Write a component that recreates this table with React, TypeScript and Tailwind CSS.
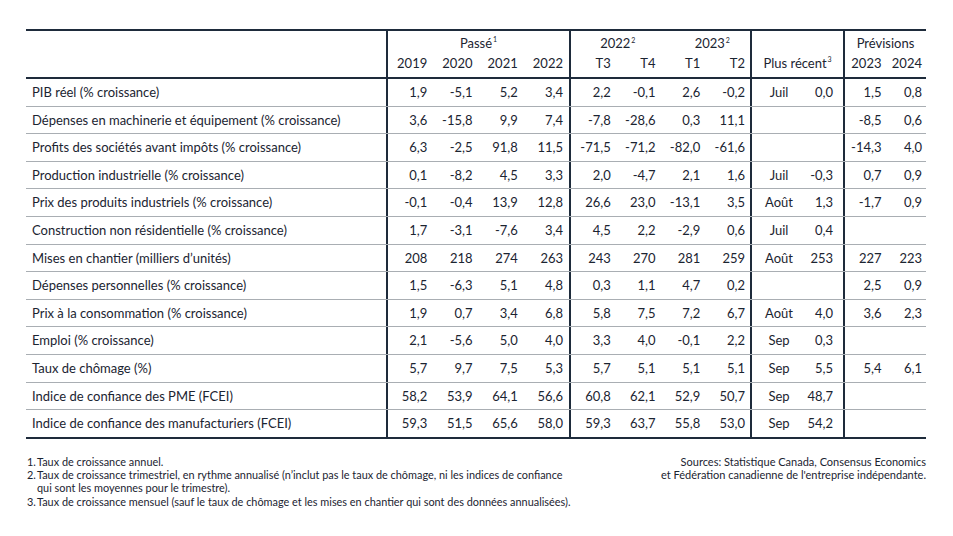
import React from 'react';

type Row = [string, ...string[]];

const rows: Row[] = [
  ['PIB réel (% croissance)', '1,9', '-5,1', '5,2', '3,4', '2,2', '-0,1', '2,6', '-0,2', 'Juil', '0,0', '1,5', '0,8'],
  ['Dépenses en machinerie et équipement (% croissance)', '3,6', '-15,8', '9,9', '7,4', '-7,8', '-28,6', '0,3', '11,1', '', '', '-8,5', '0,6'],
  ['Profits des sociétés avant impôts (% croissance)', '6,3', '-2,5', '91,8', '11,5', '-71,5', '-71,2', '-82,0', '-61,6', '', '', '-14,3', '4,0'],
  ['Production industrielle (% croissance)', '0,1', '-8,2', '4,5', '3,3', '2,0', '-4,7', '2,1', '1,6', 'Juil', '-0,3', '0,7', '0,9'],
  ['Prix des produits industriels (% croissance)', '-0,1', '-0,4', '13,9', '12,8', '26,6', '23,0', '-13,1', '3,5', 'Août', '1,3', '-1,7', '0,9'],
  ['Construction non résidentielle (% croissance)', '1,7', '-3,1', '-7,6', '3,4', '4,5', '2,2', '-2,9', '0,6', 'Juil', '0,4', '', ''],
  ['Mises en chantier (milliers d’unités)', '208', '218', '274', '263', '243', '270', '281', '259', 'Août', '253', '227', '223'],
  ['Dépenses personnelles (% croissance)', '1,5', '-6,3', '5,1', '4,8', '0,3', '1,1', '4,7', '0,2', '', '', '2,5', '0,9'],
  ['Prix à la consommation (% croissance)', '1,9', '0,7', '3,4', '6,8', '5,8', '7,5', '7,2', '6,7', 'Août', '4,0', '3,6', '2,3'],
  ['Emploi (% croissance)', '2,1', '-5,6', '5,0', '4,0', '3,3', '4,0', '-0,1', '2,2', 'Sep', '0,3', '', ''],
  ['Taux de chômage (%)', '5,7', '9,7', '7,5', '5,3', '5,7', '5,1', '5,1', '5,1', 'Sep', '5,5', '5,4', '6,1'],
  ['Indice de confiance des PME (FCEI)', '58,2', '53,9', '64,1', '56,6', '60,8', '62,1', '52,9', '50,7', 'Sep', '48,7', '', ''],
  ['Indice de confiance des manufacturiers (FCEI)', '59,3', '51,5', '65,6', '58,0', '59,3', '63,7', '55,8', '53,0', 'Sep', '54,2', '', ''],
];

const Sup = ({ children }: { children: React.ReactNode }) => (
  <sup className="text-[7px] -top-[5px] ml-[1px]">{children}</sup>
);

const App = () => {
  return (
    <div
      className="w-[953px] h-[536px] bg-white text-[#1b2431] pl-[26px] pt-[29px]"
      style={{ fontFamily: 'Lato, "Noto Sans", sans-serif' }}
    >
      <div className="w-[900px] text-[13px]">
        {/* header */}
        <div className="flex h-[50px] border-t-2 border-b-2 border-[#1e2b3b]">
          <div className="w-[360px]" />
          <div className="w-[183px] border-l-2 border-[#1e2b3b] pt-[3px]">
            <div className="h-[20px] flex items-center justify-center">
              Passé<Sup>1</Sup>
            </div>
            <div className="h-[20px] grid grid-cols-4 items-center">
              {['2019', '2020', '2021', '2022'].map(y => (
                <div key={y} className="text-right pr-[6px]">{y}</div>
              ))}
            </div>
          </div>
          <div className="w-[181px] border-l-2 border-[#1e2b3b] pt-[3px]">
            <div className="h-[20px] grid grid-cols-2 items-center">
              <div className="text-center pl-[4px]">2022<Sup>2</Sup></div>
              <div className="text-center pl-[14px]">2023<Sup>2</Sup></div>
            </div>
            <div className="h-[20px] grid grid-cols-4 items-center">
              {['T3', 'T4', 'T1', 'T2'].map(q => (
                <div key={q} className="text-right pr-[5px]">{q}</div>
              ))}
            </div>
          </div>
          <div className="w-[93px] border-l-2 border-[#1e2b3b] pt-[23px]">
            <div className="h-[20px] flex items-center justify-center">
              Plus récent<Sup>3</Sup>
            </div>
          </div>
          <div className="w-[83px] border-l-2 border-[#1e2b3b] pt-[3px]">
            <div className="h-[20px] flex items-center justify-center">Prévisions</div>
            <div className="h-[20px] grid grid-cols-2 items-center">
              <div className="text-right pr-[4px]">2023</div>
              <div className="text-right pr-[4px]">2024</div>
            </div>
          </div>
        </div>

        {/* body */}
        {rows.map((r, i) => {
          const last = i === rows.length - 1;
          const rowCls = last
            ? 'flex h-[28.4px] border-b-2 border-[#1e2b3b] pt-[1px]'
            : 'flex h-[27.6px] border-b border-[#a9aeb3] pt-[1px]';
          return (
            <div key={r[0]} className={rowCls}>
              <div className="w-[360px] pl-[6px] flex items-center">{r[0]}</div>
              <div className="w-[183px] border-l-2 border-[#1e2b3b] grid grid-cols-4 items-center -mt-[1px]">
                {r.slice(1, 5).map((v, j) => (
                  <div key={j} className="text-right pr-[6px] pt-[1px]">{v}</div>
                ))}
              </div>
              <div className="w-[181px] border-l-2 border-[#1e2b3b] grid grid-cols-4 items-center -mt-[1px]">
                {r.slice(5, 9).map((v, j) => (
                  <div key={j} className="text-right pr-[5px] pt-[1px]">{v}</div>
                ))}
              </div>
              <div className="w-[93px] border-l-2 border-[#1e2b3b] flex items-center -mt-[1px] pt-[1px]">
                <div className="w-[54px] text-center">{r[9]}</div>
                <div className="flex-1 text-right pr-[10px]">{r[10]}</div>
              </div>
              <div className="w-[83px] border-l-2 border-[#1e2b3b] grid grid-cols-2 items-center -mt-[1px]">
                <div className="text-right pr-[4px] pt-[1px]">{r[11]}</div>
                <div className="text-right pr-[4px] pt-[1px]">{r[12]}</div>
              </div>
            </div>
          );
        })}

        {/* notes */}
        <div className="flex justify-between mt-[16px] leading-[13.4px]">
          <div className="w-[540px] pl-[1px] text-[10.9px]">
            <div className="flex"><span className="w-[10px] shrink-0">1.</span><span>Taux de croissance annuel.</span></div>
            <div className="flex"><span className="w-[10px] shrink-0">2.</span><span>Taux de croissance trimestriel, en rythme annualisé (n’inclut pas le taux de chômage, ni les indices de confiance qui sont les moyennes pour le trimestre).</span></div>
            <div className="flex"><span className="w-[10px] shrink-0">3.</span><span className="whitespace-nowrap">Taux de croissance mensuel (sauf le taux de chômage et les mises en chantier qui sont des données annualisées).</span></div>
          </div>
          <div className="text-right text-[11px]">
            <div>Sources: Statistique Canada, Consensus Economics</div>
            <div>et Fédération canadienne de l'entreprise indépendante.</div>
          </div>
        </div>
      </div>
    </div>
  );
};

export default App;
